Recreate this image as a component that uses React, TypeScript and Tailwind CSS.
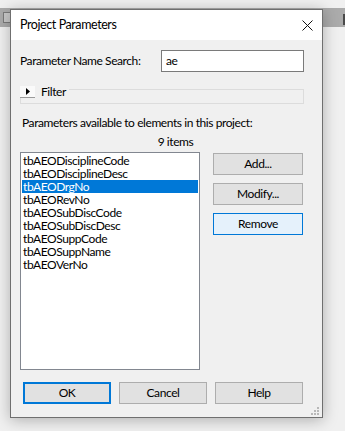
import React from "react";

const items = [
  "tbAEODisciplineCode",
  "tbAEODisciplineDesc",
  "tbAEODrgNo",
  "tbAEORevNo",
  "tbAEOSubDiscCode",
  "tbAEOSubDiscDesc",
  "tbAEOSuppCode",
  "tbAEOSuppName",
  "tbAEOVerNo",
];

function Btn({ label, variant = "normal" }: { label: string; variant?: "normal" | "hot" | "default" }) {
  const cls =
    variant === "hot"
      ? "border border-[#0078d7] bg-[#e5f1fb]"
      : variant === "default"
      ? "border-2 border-[#0078d7] bg-[#e1e1e1]"
      : "border border-[#adadad] bg-[#e1e1e1]";
  return (
    <div className={`h-[22px] flex items-center justify-center ${cls}`}>
      <span className="leading-none">{label}</span>
    </div>
  );
}

export default function App() {
  return (
    <div className="relative w-[345px] h-[431px] overflow-hidden bg-[#f0f0f0] font-['Lato',sans-serif] text-[12px] tracking-[-0.42px] text-black">
      {/* background app toolbar */}
      <div className="absolute left-0 right-0 top-[8px] h-[19px] bg-[#ababab]" />
      <div className="absolute left-[3px] top-[12px] w-[8px] h-[11px] border border-[#7a7a7a] bg-[#c8c8c8]" />
      <div className="absolute right-0 top-[14px] w-[2px] h-[11px] bg-[#4a4a4a]" />

      {/* dialog */}
      <div className="absolute left-[10px] top-[9px] w-[313px] h-[409px] border border-[#6f6f6f] bg-[#f0f0f0] shadow-[0_2px_14px_rgba(0,0,0,0.28)] flex flex-col">
        <div className="h-[30px] bg-white flex items-center justify-between pl-[9px] pr-[9px]">
          <span className="text-[12.5px]">Project Parameters</span>
          <svg width="11" height="11" viewBox="0 0 11 11" className="mt-[1px]">
            <path d="M0.5 0.5 L10.5 10.5 M10.5 0.5 L0.5 10.5" stroke="#111" strokeWidth="1" fill="none" />
          </svg>
        </div>

        <div className="flex-1 flex flex-col pl-[9px] pr-[18px]">
          {/* search row */}
          <div className="mt-[10px] h-[22px] flex items-center">
            <span>Parameter Name Search:</span>
            <div className="ml-auto w-[143px] h-[22px] border border-[#7a7a7a] bg-white flex items-center pl-[4px]">
              ae
            </div>
          </div>

          {/* filter group */}
          <div className="relative mt-[14px] h-[18px]">
            <div className="absolute left-0 right-0 top-[3px] bottom-0 border border-[#dcdcdc]" />
            <div className="absolute left-0 top-0 flex items-center h-[12px]">
              <div className="w-[15px] h-[12px] bg-[#fafafa] border-b border-[#9a9a9a] flex items-center justify-center">
                <svg width="4" height="7" viewBox="0 0 4 7">
                  <path d="M0 0 L4 3.5 L0 7 Z" fill="#000" />
                </svg>
              </div>
              <span className="bg-[#f0f0f0] pl-[6px] pr-[3px] leading-[12px]">Filter</span>
            </div>
          </div>

          <div className="mt-[11px] h-[15px] leading-[15px] pl-[2px]">
            Parameters available to elements in this project:
          </div>
          <div className="mt-[4px] h-[15px] leading-[15px] pl-[27px] text-center">9 items</div>

          {/* list + side buttons */}
          <div className="mt-[3px] flex gap-[13px]">
            <div className="w-[180px] h-[218px] border border-[#828790] bg-white p-[1px]">
              {items.map((it) => (
                <div
                  key={it}
                  className={`h-[13px] leading-[13px] pl-[1px] ${
                    it === "tbAEODrgNo" ? "bg-[#0078d7] text-white" : ""
                  }`}
                >
                  {it}
                </div>
              ))}
            </div>
            <div className="w-[90px] mt-[1px] flex flex-col gap-[8px]">
              <Btn label="Add..." />
              <Btn label="Modify..." />
              <Btn label="Remove" variant="hot" />
            </div>
          </div>

          {/* bottom buttons */}
          <div className="mt-[12px] pl-[3px] flex gap-[8px]">
            <div className="w-[88px]"><Btn label="OK" variant="default" /></div>
            <div className="w-[88px]"><Btn label="Cancel" /></div>
            <div className="w-[88px]"><Btn label="Help" /></div>
          </div>
        </div>

        {/* size grip */}
        <div className="absolute right-[3px] bottom-[2px] grid grid-cols-3 gap-[1px]">
          <span className="w-[2px] h-[2px]" />
          <span className="w-[2px] h-[2px]" />
          <span className="w-[2px] h-[2px] bg-[#b8b8b8]" />
          <span className="w-[2px] h-[2px]" />
          <span className="w-[2px] h-[2px] bg-[#b8b8b8]" />
          <span className="w-[2px] h-[2px] bg-[#b8b8b8]" />
          <span className="w-[2px] h-[2px] bg-[#b8b8b8]" />
          <span className="w-[2px] h-[2px] bg-[#b8b8b8]" />
          <span className="w-[2px] h-[2px] bg-[#b8b8b8]" />
        </div>
      </div>
    </div>
  );
}
